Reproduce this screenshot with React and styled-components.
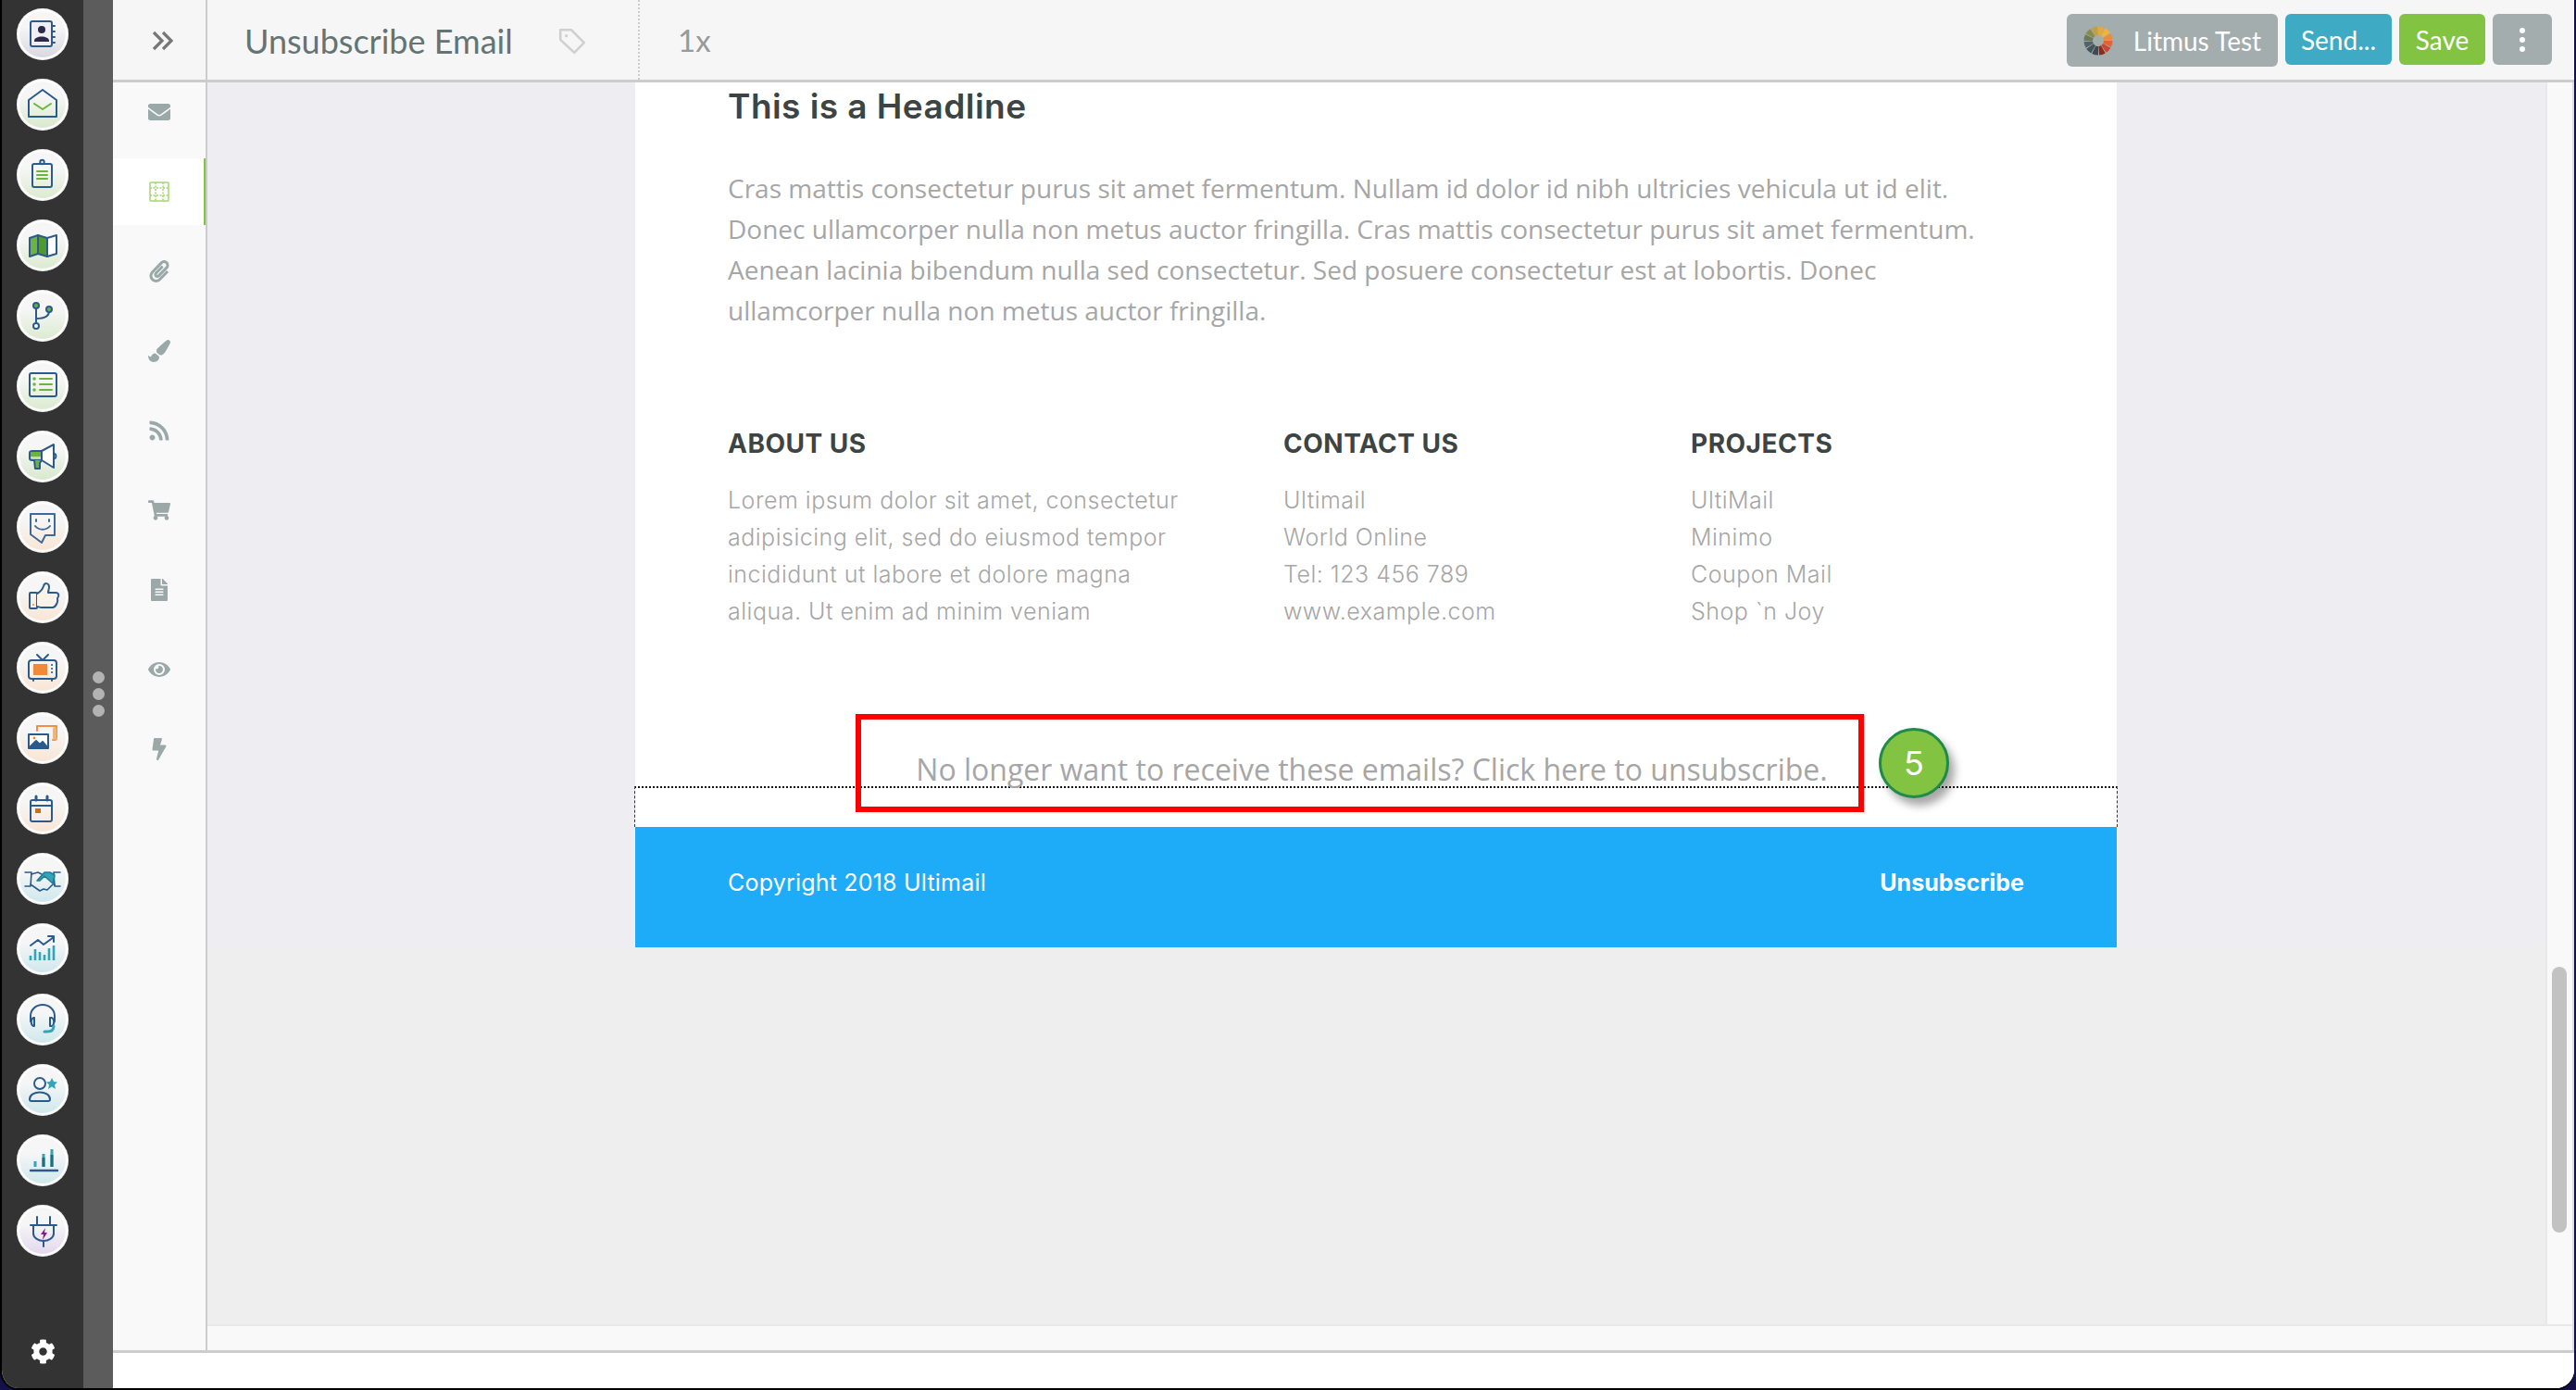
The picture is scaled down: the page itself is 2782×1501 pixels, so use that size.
import React from "react";
import styled, { createGlobalStyle } from "styled-components";
import {
  FaEnvelope,
  FaPaperclip,
  FaPaintBrush,
  FaRss,
  FaShoppingCart,
  FaFileAlt,
  FaEye,
  FaBolt,
  FaCog,
} from "react-icons/fa";

const BLUE = "#2a5b8c";
const GREEN = "#6db33f";
const ORANGE = "#ef8a3c";
const TEAL = "#35a3b8";

const GlobalStyle = createGlobalStyle`
  html, body {
    margin: 0;
    padding: 0;
    background: #000;
    overflow: hidden;
  }
`;

const Root = styled.div`
  width: 2782px;
  height: 1501px;
  background: #14104a;
  overflow: hidden;
`;

const Window = styled.div`
  display: flex;
  width: 2780px;
  height: 1499px;
  border-radius: 0 0 20px 20px;
  overflow: hidden;
  background: #fff;
  border-left: 2px solid #000;
  box-sizing: border-box;
  box-shadow: 0 2px 0 #000;
`;

const Rail = styled.nav`
  width: 88px;
  flex: none;
  background: #333;
  display: flex;
  flex-direction: column;
  align-items: center;
  gap: 20px;
  padding: 9px 0 26px;
  box-sizing: border-box;
`;

const RailButton = styled.div`
  width: 56px;
  height: 56px;
  flex: none;
  border-radius: 50%;
  background: #fff;
  padding: 3px;
  box-sizing: border-box;
  box-shadow: inset 0 0 2px #ccc;
`;

const RailFace = styled.div`
  width: 50px;
  height: 50px;
  border-radius: 50%;
  background: linear-gradient(#f6f6f6 35%, ${(props) => props.$tint});
  position: relative;

  svg {
    position: absolute;
    left: -3px;
    top: -3px;
    width: 56px;
    height: 56px;
  }
`;

const RailSettings = styled.div`
  margin-top: auto;
  color: #fff;
  font-size: 27px;
  line-height: 0;
`;

const Gutter = styled.div`
  width: 32px;
  flex: none;
  background: #5c5c5c;
  display: flex;
  flex-direction: column;
  align-items: center;
  justify-content: center;
  gap: 5px;
`;

const GutterDot = styled.span`
  width: 13px;
  height: 13px;
  border-radius: 50%;
  background: #b3b3b3;
`;

const Workspace = styled.div`
  flex: 1;
  min-width: 0;
  display: flex;
  flex-direction: column;
  background: #fff;
`;

const Upper = styled.div`
  height: 1461px;
  flex: none;
  display: flex;
  border-bottom: 3px solid #ccc;
  box-sizing: border-box;
`;

const SidePanel = styled.aside`
  width: 102px;
  flex: none;
  background: #f9f9f9;
  border-right: 2px solid #ccc;
  box-sizing: border-box;
`;

const ExpandCell = styled.div`
  height: 89px;
  background: #f6f6f6;
  border-bottom: 3px solid #ccc;
  box-sizing: border-box;
  display: flex;
  align-items: center;
  justify-content: center;
  padding: 2px 0 0 8px;
`;

const SideList = styled.div`
  display: grid;
  grid-auto-rows: 72px;
  row-gap: 14px;
  margin-top: -4px;
`;

const SideItem = styled.div`
  display: flex;
  align-items: center;
  justify-content: center;
  padding-left: 1px;
  font-size: 24px;
  color: #9aa8a8;
  background: ${(props) => (props.$active ? "#fff" : "transparent")};
  border-right: 2px solid ${(props) => (props.$active ? "#82c341" : "transparent")};
`;

const Main = styled.div`
  flex: 1;
  min-width: 0;
  display: flex;
  flex-direction: column;
  background: #ddd;
`;

const TopBar = styled.header`
  height: 89px;
  flex: none;
  background: #f6f6f6;
  border-bottom: 3px solid #ccc;
  box-sizing: border-box;
  display: flex;
  align-items: center;
  padding: 1px 24px 0 40px;
  font-family: Lato, sans-serif;
`;

const Title = styled.div`
  font-size: 36px;
  color: #647474;
  width: 340px;
  flex: none;
`;

const TagIcon = styled.svg`
  width: 32px;
  height: 32px;
  margin-left: -2px;
  flex: none;
`;

const Zoom = styled.div`
  height: 86px;
  margin: -1px 0 0 55px;
  border-left: 2px dotted #ccc;
  padding-left: 41px;
  display: flex;
  align-items: center;
  font-size: 33px;
  color: #999;
`;

const Actions = styled.div`
  margin-left: auto;
  display: flex;
  align-items: flex-start;
  gap: 8px;
`;

const Button = styled.div`
  height: ${(props) => (props.$tall ? "57px" : "55px")};
  width: ${(props) => props.$w}px;
  background: ${(props) => props.$bg};
  color: #fff;
  border-radius: 6px;
  font-size: 28px;
  display: flex;
  align-items: center;
  justify-content: center;
  gap: 22px;
  box-sizing: border-box;
`;

const MoreDots = styled.span`
  display: flex;
  flex-direction: column;
  gap: 4px;

  i {
    display: block;
    width: 6px;
    height: 6px;
    border-radius: 50%;
    background: #fff;
  }
`;

const Body = styled.div`
  flex: 1;
  min-height: 0;
  display: flex;
  margin-right: 2px;
`;

const Canvas = styled.div`
  flex: 1;
  min-width: 0;
  padding-left: 462px;
  background: linear-gradient(#eeedf1 934px, #eee 934px);
`;

const Email = styled.article`
  width: 1600px;
  background: #fff;
`;

const Intro = styled.section`
  padding: 4px 100px 0;
`;

const Headline = styled.h1`
  margin: 0;
  font: 600 37px/44px Inter, sans-serif;
  letter-spacing: 0.45px;
  color: #3d4444;
`;

const Paragraph = styled.p`
  margin: 44px 0 0;
  font: 400 28px/44px "Open Sans", sans-serif;
  color: #a6a6a6;
`;

const Columns = styled.section`
  display: grid;
  grid-template-columns: 600px 440px 1fr;
  padding: 104px 100px 0;
`;

const ColumnTitle = styled.h3`
  margin: 0 0 23px;
  font: 700 28px/36px Inter, sans-serif;
  letter-spacing: 0.5px;
  color: #3d4444;
`;

const ColumnLine = styled.div`
  font: 300 25px/40px Inter, sans-serif;
  letter-spacing: 0.5px;
  color: #a6a6a6;
`;

const UnsubRow = styled.section`
  position: relative;
  margin-top: 135px;
  height: 34px;
  text-align: center;
  padding-right: 9px;
  font: 400 32px/31px "Open Sans", sans-serif;
  color: #a6a6a6;
`;

const RedBox = styled.div`
  position: absolute;
  left: 238px;
  top: -44px;
  width: 1089px;
  height: 106px;
  border: 6px solid #f00;
  box-sizing: border-box;
`;

const StepBadge = styled.div`
  position: absolute;
  left: 1343px;
  top: -29px;
  width: 76px;
  height: 76px;
  border-radius: 50%;
  background: #82c341;
  border: 3px solid #1f8a4c;
  box-sizing: border-box;
  box-shadow: 6px 8px 10px rgba(0, 0, 0, 0.35);
  color: #fff;
  font: 400 36px/70px Inter, sans-serif;
  text-align: center;
`;

const SelectedBlock = styled.div`
  height: 44px;
  margin: 0 -1px;
  border-top: 2px dotted #111;
  border-left: 1px dashed #333;
  border-right: 1px dashed #333;
  box-sizing: border-box;
`;

const EmailFooter = styled.footer`
  height: 130px;
  background: #1eabf8;
  display: flex;
  align-items: center;
  justify-content: space-between;
  padding: 0 100px 10px;
  box-sizing: border-box;
  color: #fff;
  font: 400 25px/1 Inter, sans-serif;
  letter-spacing: 0.2px;
`;

const FooterLink = styled.span`
  font-weight: 700;
  letter-spacing: 0;
`;

const ScrollColumn = styled.div`
  width: 29px;
  flex: none;
  background: #f9f9f9;
  border-left: 2px solid #e8e8e8;
  box-sizing: border-box;
  padding: 955px 6px 0 5px;
`;

const ScrollThumb = styled.div`
  height: 287px;
  border-radius: 8px;
  background: #c2c2c2;
`;

const BottomStrip = styled.div`
  height: 28px;
  flex: none;
  margin-right: 2px;
  background: #f9f9f9;
  border-top: 2px solid #e8e8e8;
  box-sizing: border-box;
`;

const Stroke = ({ children, color = BLUE, width = 2 }) => (
  <svg viewBox="0 0 56 56" fill="none" stroke={color} strokeWidth={width} strokeLinecap="round" strokeLinejoin="round">
    {children}
  </svg>
);

const railIcons = [
  {
    tint: "#d9d8e2",
    art: (
      <Stroke>
        <rect x="15" y="14" width="23" height="27" rx="2" fill="#eeeef4" />
        <path d="M39 19h2M39 25h2M39 31h2M39 37h2" />
        <circle cx="27" cy="23" r="4" fill="#2d2a48" stroke="none" />
        <path d="M19 35c0-6 16-6 16 0v1H19z" fill="#2d2a48" stroke="none" />
      </Stroke>
    ),
  },
  {
    tint: "#d8e9cc",
    art: (
      <Stroke>
        <path d="M13 23 28 12l15 11v18H13z" />
        <path d="M19 27l9 6 9-6" stroke={GREEN} />
      </Stroke>
    ),
  },
  {
    tint: "#dcebd0",
    art: (
      <Stroke>
        <rect x="17" y="16" width="21" height="25" rx="2" />
        <circle cx="27.5" cy="14" r="2.2" />
        <path d="M22 24h11M22 28h11M22 32h11" stroke={GREEN} />
      </Stroke>
    ),
  },
  {
    tint: "#dcebd0",
    art: (
      <Stroke>
        <path d="M14 20l9-3v20l-9 3z" fill={GREEN} />
        <path d="M23 17l10 3v20l-10-3z" fill="#4f9a2f" />
        <path d="M33 20l10-3v20l-10 3z" fill="#fff" />
      </Stroke>
    ),
  },
  {
    tint: "#dcebd0",
    art: (
      <Stroke>
        <path d="M21 20v15M21 31c8 0 14-2 14-8" />
        <circle cx="21" cy="17" r="3" fill={GREEN} />
        <circle cx="35" cy="21" r="3" fill={GREEN} />
        <circle cx="21" cy="39" r="3" fill="#fff" />
      </Stroke>
    ),
  },
  {
    tint: "#dcebd0",
    art: (
      <Stroke>
        <rect x="14" y="14" width="29" height="25" rx="2" />
        <path d="M25 20h13M25 26h13M25 32h13" stroke={GREEN} />
        <path d="M19 20h.1M19 26h.1M19 32h.1" stroke={GREEN} strokeWidth="3.4" />
      </Stroke>
    ),
  },
  {
    tint: "#d8e9cc",
    art: (
      <Stroke>
        <path d="M17 22h10v10H17c-2 0-3-1-3-2v-6c0-1 1-2 3-2z" fill="#c9dca6" />
        <path d="M15 23h12v5H15z" fill={GREEN} stroke="none" />
        <path d="M27 22l13-7v25l-13-8z" fill="#fff" />
        <path d="M41 25c2 1 2 4 0 5" />
        <path d="M19 32l1 9h5v-6l2-3" fill={GREEN} />
      </Stroke>
    ),
  },
  {
    tint: "#f8e6d4",
    art: (
      <Stroke color="#3d6b99">
        <path d="M15 14h26v23H31l-4 8-12-9z" />
        <path d="M21 20v2M35 20v2" />
        <path d="M20 27c4 5 12 5 16 0" />
      </Stroke>
    ),
  },
  {
    tint: "#f8e6d4",
    art: (
      <Stroke>
        <rect x="14" y="23" width="8" height="17" rx="1" />
        <path d="M22 24c4-2 6-5 7-8 1-4 6-4 6 1 0 2-1 4-1 6h8c4 0 4 4 2 6 1 3-1 9-5 10H27c-2 0-4-1-5-1" fill="#fbf3ea" />
        <circle cx="18" cy="36" r="1" fill={ORANGE} stroke="none" />
      </Stroke>
    ),
  },
  {
    tint: "#f8e6d4",
    art: (
      <Stroke>
        <rect x="13" y="20" width="30" height="20" rx="3" />
        <rect x="18" y="24" width="15" height="12" fill={ORANGE} stroke="none" />
        <path d="M22 14l6 6 6-6M18 40v2M38 40v2" />
        <path d="M38 25h.1M38 29h.1M38 33h.1" />
      </Stroke>
    ),
  },
  {
    tint: "#f8e6d4",
    art: (
      <Stroke>
        <path d="M22 20v-5h21v12c0 2-1 3-2 3h-2" stroke="#f28f45" />
        <path d="M41 18v10" stroke="#f8b26d" strokeWidth="4" />
        <rect x="13" y="24" width="21" height="15" fill="#fff" />
        <path d="M14 38l7-7 4 4 3-3 5 6z" fill={BLUE} />
        <circle cx="19" cy="28" r="1.4" fill={ORANGE} stroke="none" />
      </Stroke>
    ),
  },
  {
    tint: "#f8e6d4",
    art: (
      <Stroke>
        <rect x="15" y="19" width="23" height="23" rx="2" />
        <path d="M15 25h23" />
        <path d="M21 15v4M33 15v4" strokeWidth="3" />
        <rect x="20" y="28" width="6" height="5" fill="#d76b10" stroke="none" />
      </Stroke>
    ),
  },
  {
    tint: "#cfe8ec",
    art: (
      <Stroke width={1.6}>
        <path d="M9 21h7l-1 15H9M47 21h-7l1 15h6" />
        <path d="M16 23l7-2 4 2M15 34l10 7 4-2 4 1 6-6 2 0" />
        <path d="M22 30l8-9h6l5 3-2 9-9-8-5 5z" fill={TEAL} stroke="#1f7f97" />
      </Stroke>
    ),
  },
  {
    tint: "#cfe8ec",
    art: (
      <Stroke>
        <path d="M15 24l8-6 6 5 11-8M34 14h6v6" />
        <path d="M15 40v-5M20 40V28M25 40v-9M30 40v-6M35 40V27M40 40V24" stroke={TEAL} strokeWidth="2.6" strokeLinecap="butt" />
      </Stroke>
    ),
  },
  {
    tint: "#cfe8ec",
    art: (
      <Stroke>
        <path d="M15 30V24a13 12 0 0 1 26 0v6" />
        <path d="M19 26h-1a4 5 0 0 0 0 9h1zM36 26h2a4 5 0 0 1 0 9h-2z" />
        <path d="M40 35c0 5-3 6-7 6h-3" stroke={TEAL} strokeWidth="3" />
      </Stroke>
    ),
  },
  {
    tint: "#cfe8ec",
    art: (
      <Stroke>
        <circle cx="25" cy="21" r="6" />
        <path d="M14 38c0-10 22-10 22 0 0 1-1 2-2 2H16c-1 0-2-1-2-2z" />
        <path d="M38 15l2 4 4 .5-3 3 1 4.500-4-2.500-4 2.500 1-4.500-3-3 4-.5z" fill={TEAL} stroke="none" />
      </Stroke>
    ),
  },
  {
    tint: "#cfe8ec",
    art: (
      <Stroke>
        <path d="M15 39h29" strokeWidth="2.4" />
        <path d="M20 35v-6M29 35V21M38 35V16" stroke={TEAL} strokeWidth="3" strokeLinecap="butt" />
        <path d="M29 35V25M38 35V22" stroke="#1d6f80" strokeWidth="3" strokeLinecap="butt" />
      </Stroke>
    ),
  },
  {
    tint: "#e4d8ef",
    art: (
      <Stroke>
        <path d="M22 13v8M36 13v8M15 22h28" />
        <path d="M18 22v9c0 5 6 8 11 8s11-3 11-8v-9" />
        <path d="M29 39v6" />
        <path d="M31 25l-5 7h3l-1 6 5-8h-3z" fill="#8a1a8c" stroke="none" />
      </Stroke>
    ),
  },
];

const sideIcons = [
  <FaEnvelope key="mail" />,
  <svg key="grid" width="22" height="22" viewBox="0 0 22 22" fill="none" stroke="#a5d672" strokeWidth="1.5">
    <rect x="1" y="1" width="20" height="20" rx="1" />
    <path d="M1 7h20M1 15h20M7 1v20M15 1v20" strokeDasharray="2 1.500" />
  </svg>,
  <FaPaperclip key="clip" />,
  <FaPaintBrush key="brush" />,
  <FaRss key="rss" />,
  <FaShoppingCart key="cart" />,
  <FaFileAlt key="doc" />,
  <FaEye key="eye" />,
  <FaBolt key="bolt" />,
];

const wheelColors = [
  "#e2a93c", "#f2b33a", "#ee8a3a", "#e0643a", "#c9482f", "#8c2a1e",
  "#3d4a52", "#46555c", "#55646a", "#6b7a58", "#8c8a4a", "#b8a24a",
];

const LitmusWheel = () => (
  <svg width="32" height="32" viewBox="0 0 32 32">
    {wheelColors.map((color, i) => {
      const a = ((i * 30 - 90) * Math.PI) / 180;
      const b = (((i + 1) * 30 - 90 - 4) * Math.PI) / 180;
      const p = (r, t) => `${16 + r * Math.cos(t)} ${16 + r * Math.sin(t)}`;
      return (
        <path
          key={color}
          d={`M${p(6, a)} L${p(15.5, a)} A15.5 15.5 0 0 1 ${p(15.5, b)} L${p(6, b)} A6 6 0 0 0 ${p(6, a)}Z`}
          fill={color}
        />
      );
    })}
  </svg>
);

const footerColumns = [
  {
    title: "ABOUT US",
    lines: [
      "Lorem ipsum dolor sit amet, consectetur",
      "adipisicing elit, sed do eiusmod tempor",
      "incididunt ut labore et dolore magna",
      "aliqua. Ut enim ad minim veniam",
    ],
  },
  { title: "CONTACT US", lines: ["Ultimail", "World Online", "Tel: 123 456 789", "www.example.com"] },
  { title: "PROJECTS", lines: ["UltiMail", "Minimo", "Coupon Mail", "Shop `n Joy"] },
];

const App = () => {
  return (
    <Root>
      <GlobalStyle />
      <Window>
        <Rail>
          {railIcons.map((icon, i) => (
            <RailButton key={i}>
              <RailFace $tint={icon.tint}>{icon.art}</RailFace>
            </RailButton>
          ))}
          <RailSettings>
            <FaCog />
          </RailSettings>
        </Rail>
        <Gutter>
          <GutterDot />
          <GutterDot />
          <GutterDot />
        </Gutter>
        <Workspace>
          <Upper>
            <SidePanel>
              <ExpandCell>
                <svg width="24" height="22" viewBox="0 0 24 22" fill="none" stroke="#777" strokeWidth="3.2">
                  <path d="M2 2l9 9-9 9M12 2l9 9-9 9" />
                </svg>
              </ExpandCell>
              <SideList>
                {sideIcons.map((icon, i) => (
                  <SideItem key={i} $active={i === 1}>
                    {icon}
                  </SideItem>
                ))}
              </SideList>
            </SidePanel>
            <Main>
              <TopBar>
                <Title>Unsubscribe Email</Title>
                <TagIcon viewBox="0 0 30 30" fill="none" stroke="#d0d0d0" strokeWidth="2.4" strokeLinejoin="round">
                  <path d="M3 4h11l13 13-10 10L3 14z" />
                  <circle cx="9" cy="10" r="1.500" fill="#d0d0d0" stroke="none" />
                </TagIcon>
                <Zoom>1x</Zoom>
                <Actions>
                  <Button $w={228} $tall $bg="#a3adad">
                    <LitmusWheel />
                    Litmus Test
                  </Button>
                  <Button $w={115} $bg="#3faac4">
                    Send...
                  </Button>
                  <Button $w={93} $bg="#82c341">
                    Save
                  </Button>
                  <Button $w={64} $bg="#a3adad">
                    <MoreDots>
                      <i />
                      <i />
                      <i />
                    </MoreDots>
                  </Button>
                </Actions>
              </TopBar>
              <Body>
                <Canvas>
                  <Email>
                    <Intro>
                      <Headline>This is a Headline</Headline>
                      <Paragraph>
                        Cras mattis consectetur purus sit amet fermentum. Nullam id dolor id nibh ultricies vehicula ut id elit.
                        <br />
                        Donec ullamcorper nulla non metus auctor fringilla. Cras mattis consectetur purus sit amet fermentum.
                        <br />
                        Aenean lacinia bibendum nulla sed consectetur. Sed posuere consectetur est at lobortis. Donec
                        <br />
                        ullamcorper nulla non metus auctor fringilla.
                      </Paragraph>
                    </Intro>
                    <Columns>
                      {footerColumns.map((col) => (
                        <div key={col.title}>
                          <ColumnTitle>{col.title}</ColumnTitle>
                          {col.lines.map((line) => (
                            <ColumnLine key={line}>{line}</ColumnLine>
                          ))}
                        </div>
                      ))}
                    </Columns>
                    <UnsubRow>
                      No longer want to receive these emails? Click here to unsubscribe.
                      <RedBox />
                      <StepBadge>5</StepBadge>
                    </UnsubRow>
                    <SelectedBlock />
                    <EmailFooter>
                      <span>Copyright 2018 Ultimail</span>
                      <FooterLink>Unsubscribe</FooterLink>
                    </EmailFooter>
                  </Email>
                </Canvas>
                <ScrollColumn>
                  <ScrollThumb />
                </ScrollColumn>
              </Body>
              <BottomStrip />
            </Main>
          </Upper>
        </Workspace>
      </Window>
    </Root>
  );
};

export default App;
